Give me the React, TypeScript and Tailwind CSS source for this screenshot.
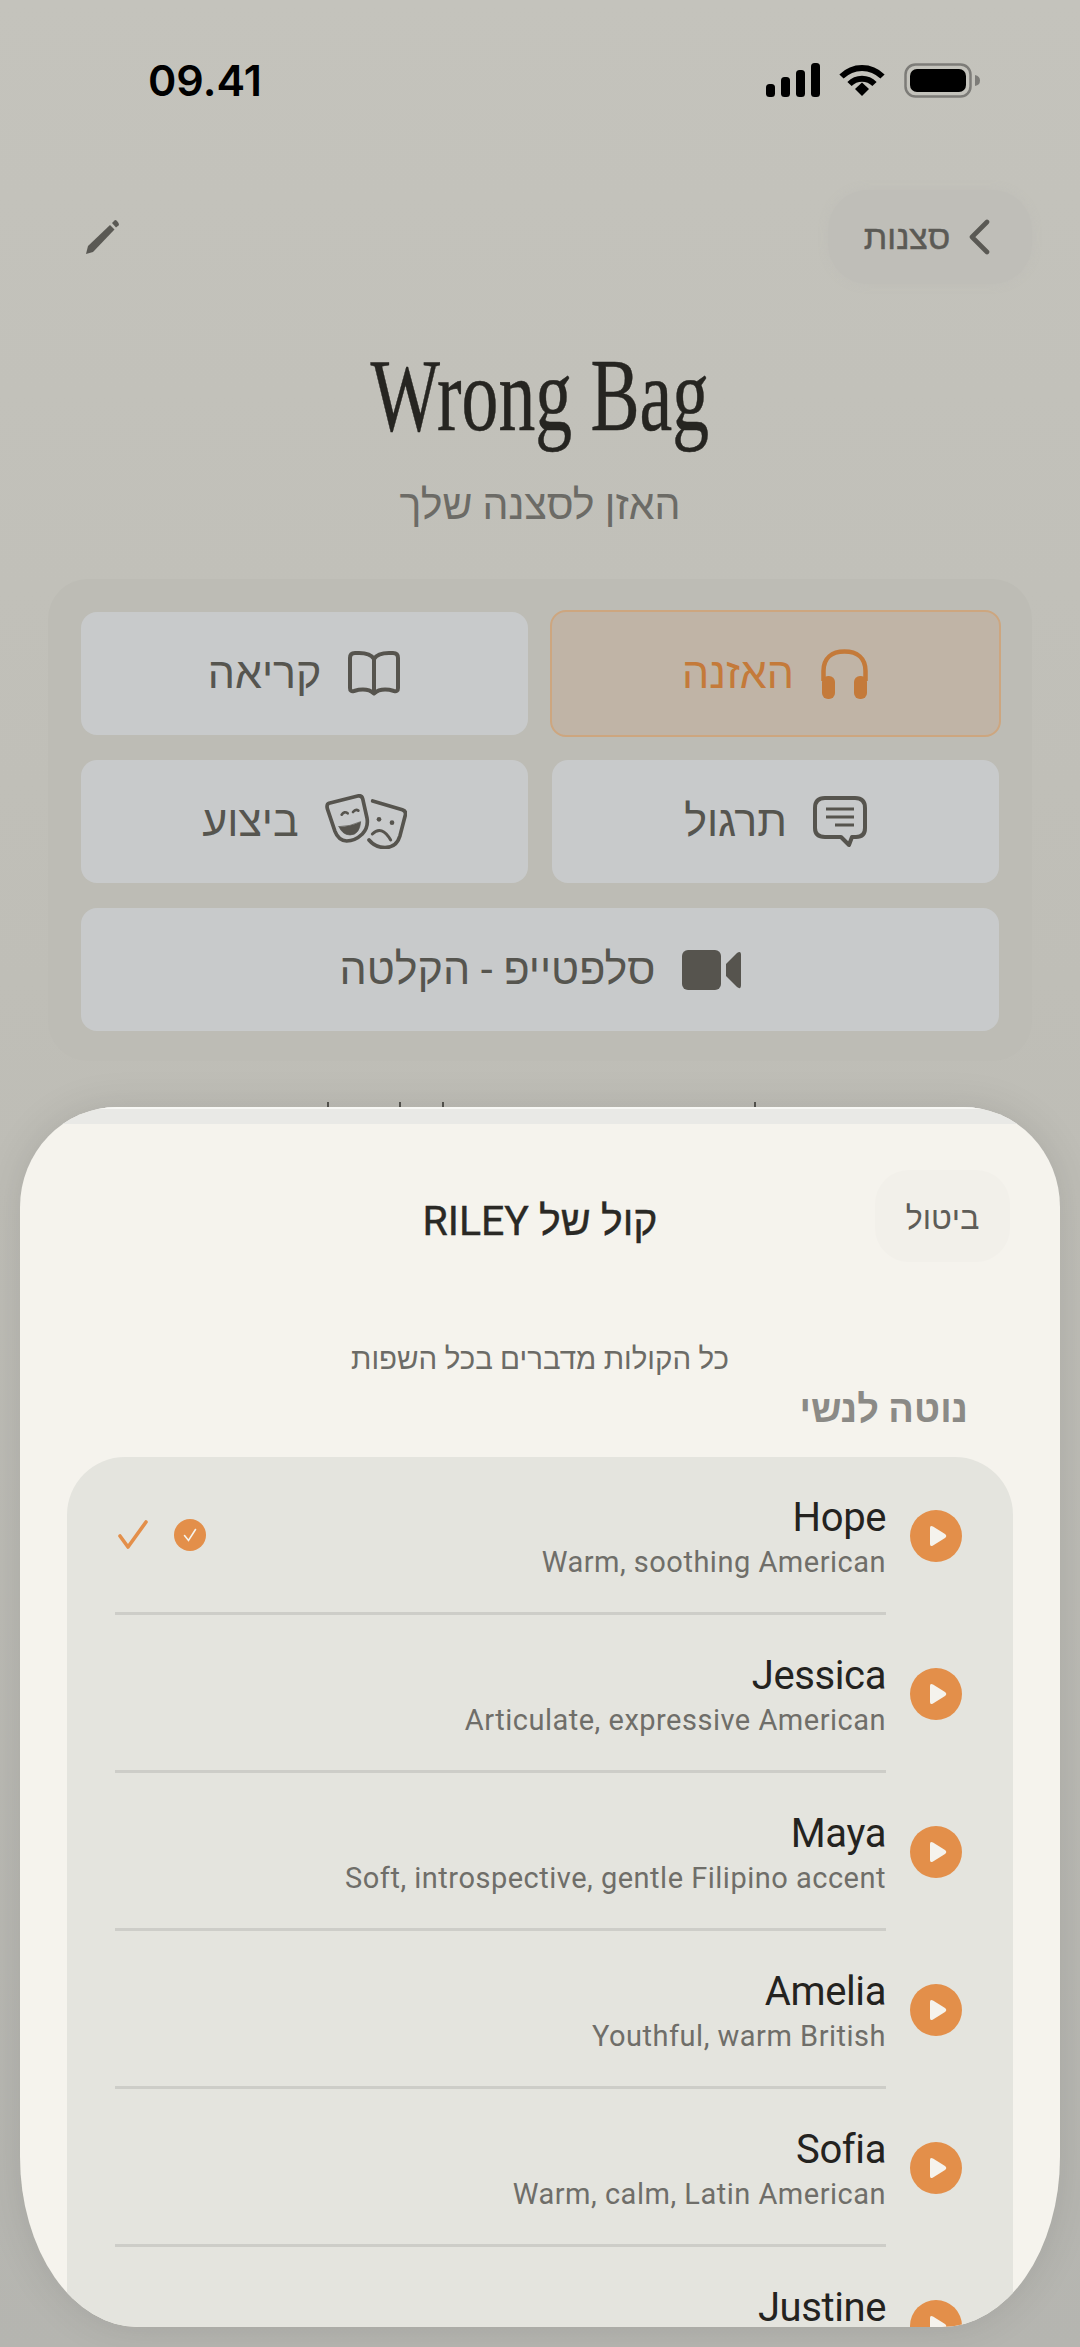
import type { ReactNode } from "react";

const sans = 'font-["Roboto","Liberation_Sans",sans-serif]';

const voices = [
  { name: "Hope", desc: "Warm, soothing American", selected: true },
  { name: "Jessica", desc: "Articulate, expressive American" },
  { name: "Maya", desc: "Soft, introspective, gentle Filipino accent" },
  { name: "Amelia", desc: "Youthful, warm British" },
  { name: "Sofia", desc: "Warm, calm, Latin American" },
  { name: "Justine" },
];

function StatusIcons() {
  return (
    <div dir="ltr" className="flex items-center gap-[19px]">
      <svg width="54" height="34" viewBox="0 0 54 34" fill="#000">
        <rect x="0" y="21" width="9" height="13" rx="3.5" />
        <rect x="15" y="14" width="9" height="20" rx="3.5" />
        <rect x="30" y="7" width="9" height="27" rx="3.5" />
        <rect x="45" y="0" width="9" height="34" rx="3.5" />
      </svg>
      <svg width="46" height="34" viewBox="0 0 46 34" fill="none" stroke="#000" strokeWidth="6">
        <path d="M2.5 13.5 C14 2 32 2 43.5 13.5" />
        <path d="M10.5 21 C17.5 14 28.5 14 35.5 21" />
        <path d="M16 26 L23 19.5 L30 26 L23 33 Z" fill="#000" stroke="none" />
      </svg>
      <svg width="76" height="35" viewBox="0 0 76 35">
        <rect x="1.5" y="1.5" width="65" height="32" rx="10" fill="none" stroke="#7d7c78" strokeWidth="2.5" />
        <rect x="6" y="6" width="56" height="23" rx="7" fill="#000" />
        <path d="M71 12 Q76 13 76 17.5 Q76 22 71 23 Z" fill="#7d7c78" />
      </svg>
    </div>
  );
}

function Pencil() {
  return (
    <svg width="35" height="36" viewBox="0 0 35 36" fill="#5a5954">
      <path d="M1 35 L3 27 L25 6 L29.5 10.5 L8 33 Z" />
      <path d="M27 4 L29.5 1.5 Q30.5 0.5 32 2 L33.5 4 Q34.5 5.5 33.5 6.5 L31 8.5 Z" />
    </svg>
  );
}

function Book() {
  return (
    <svg width="54" height="45" viewBox="0 0 54 45" fill="none" stroke="#56544e" strokeWidth="4" strokeLinejoin="round">
      <path d="M27 8 C24 3 18 2 12 2 H8 Q3 2 3 7 V37 Q3 41 7 40 C14 38 22 38 27 42.5 C32 38 40 38 47 40 Q51 41 51 37 V7 Q51 2 46 2 H42 C36 2 30 3 27 8 Z M27 8 V42" />
    </svg>
  );
}

function Headphones() {
  return (
    <svg width="49" height="50" viewBox="0 0 49 50" fill="#c47a3a">
      <path d="M3.5 32 V22 C3.5 9 12 2.5 24.5 2.5 C37 2.5 45.5 9 45.5 22 V32" fill="none" stroke="#c47a3a" strokeWidth="4.5" />
      <rect x="2" y="27" width="13" height="23" rx="6" />
      <rect x="34" y="27" width="13" height="23" rx="6" />
    </svg>
  );
}

function Masks() {
  return (
    <svg width="82" height="55" viewBox="0 0 246 165" fill="none" stroke="#56544e" strokeWidth="11" strokeLinecap="round" strokeLinejoin="round">
      <path d="M12 28 L98 6 Q110 3 113 14 L126 72 Q131 100 112 120 Q90 141 65 141 Q40 139 30 112 L7 44 Q4 31 12 28 Z" />
      <path d="M143 21 L232 47 Q244 51 241 63 L225 125 Q215 160 180 161 Q150 160 132 138" />
      <path d="M50 62 Q58 50 68 58" strokeWidth="8" />
      <path d="M84 54 Q92 44 100 50" strokeWidth="8" />
      <path d="M42 98 Q75 98 107 83 Q104 122 75 123 Q52 122 42 98 Z" fill="#56544e" strokeWidth="2" />
      <circle cx="162" cy="76" r="7" fill="#56544e" stroke="none" />
      <circle cx="201" cy="86" r="7" fill="#56544e" stroke="none" />
      <path d="M142 120 Q170 92 197 138" strokeWidth="9" />
    </svg>
  );
}

function Message() {
  return (
    <svg width="54" height="51" viewBox="0 0 54 51" fill="none" stroke="#56544e" strokeWidth="4" strokeLinejoin="round">
      <path d="M12 2 H42 Q52 2 52 12 V32 Q52 41 43 41 H39 L36 49 L28 41 H12 Q2 41 2 32 V12 Q2 2 12 2 Z" />
      <path d="M13 13 H41 M13 21 H41 M22 29 H41" strokeWidth="3" />
    </svg>
  );
}

function Video() {
  return (
    <svg width="59" height="40" viewBox="0 0 59 40" fill="#56544e">
      <rect x="0" y="0" width="39" height="40" rx="6" />
      <path d="M44 14 L55 3 Q59 0 59 5 V35 Q59 40 55 37 L44 26 Z" />
    </svg>
  );
}

function Mode({ label, icon, active, wide }: { label: string; icon: ReactNode; active?: boolean; wide?: boolean }) {
  return (
    <div
      className={[
        "flex items-center justify-center gap-[26px] rounded-[16px] text-[43px] leading-none",
        wide ? "col-span-2 h-[123px]" : "h-[123px]",
        active
          ? "-m-[2px] h-[127px] border-2 border-[#cda67f] bg-[#c0b4a6] text-[#c47a3a]"
          : "bg-[#c8cacb] text-[#56554f]",
      ].join(" ")}
    >
      {icon}
      <span>{label}</span>
    </div>
  );
}

function Voice({ name, desc, selected }: { name: string; desc?: string; selected?: boolean }) {
  return (
    <div className="flex h-[158px] shrink-0 items-center gap-[24px] pl-[48px] pr-[51px]">
      <div className="flex h-[52px] w-[52px] shrink-0 items-center justify-center rounded-full bg-[#e38f4a]">
        <svg width="18" height="22" viewBox="0 0 18 22" fill="#f5f3ed" className="ml-[3px]">
          <path d="M1 3 Q1 0 4 1.5 L16 9 Q18.5 11 16 13 L4 20.5 Q1 22 1 19 Z" />
        </svg>
      </div>
      <div className="flex h-full flex-1 items-center justify-between border-b-[3px] border-[#cdcdc8]">
        <div className="flex flex-col items-start pt-[6px]">
          <span dir="ltr" className="text-[40px] leading-[46px] tracking-[-0.4px] text-[#24231f]">{name}</span>
          <span dir="ltr" className="mt-[2px] min-h-[38px] text-[29px] leading-[38px] tracking-[0.5px] text-[#6f6e69]">{desc}</span>
        </div>
        {selected && (
          <div className="ml-[3px] flex items-center gap-[26px]">
            <div className="flex h-[32px] w-[32px] items-center justify-center rounded-full bg-[#e38f4a]">
              <svg width="16" height="16" viewBox="0 0 16 16" fill="none" stroke="#f5f3ed" strokeWidth="1.6" strokeLinecap="round">
                <path d="M2.5 8.5 L6.5 13.5 L13.5 2.5" />
              </svg>
            </div>
            <svg width="30" height="29" viewBox="0 0 30 29" fill="none" stroke="#e38f4a" strokeWidth="3.6" strokeLinecap="round" strokeLinejoin="round">
              <path d="M2 16 L10 27 L28 2" />
            </svg>
          </div>
        )}
      </div>
    </div>
  );
}

export default function App() {
  return (
    <div dir="rtl" className={`relative h-[2347px] w-[1080px] overflow-hidden bg-gradient-to-b from-[#c4c3bc] via-[#bebdb6] to-[#b5b5b0] ${sans}`}>
      {/* status bar */}
      <div className="flex h-[100px] items-center justify-between pl-[148px] pr-[100px] pt-[60px]">
        <StatusIcons />
        <span dir="ltr" className='font-["Inter",sans-serif] text-[43px] font-semibold leading-none text-black'>09.41</span>
      </div>

      {/* nav */}
      <div className="mt-[90px] flex h-[94px] items-center justify-between pl-[85px] pr-[48px]">
        <div className="flex h-full w-[204px] items-center justify-center gap-[18px] rounded-[40px] bg-[#bfbeb8] pr-[6px] shadow-[0_0_10px_rgba(191,190,184,0.9)]">
          <svg width="22" height="36" viewBox="0 0 22 36" fill="none" stroke="#5a5954" strokeWidth="4.6" strokeLinecap="round" strokeLinejoin="round">
            <path d="M19 3 L4 18 L19 33" />
          </svg>
          <span className="text-[34px] leading-none text-[#5b5a55] [-webkit-text-stroke:0.5px_#5b5a55]">סצנות</span>
        </div>
        <Pencil />
      </div>

      {/* title */}
      <div className="mt-[51px] flex h-[120px] items-center justify-center">
        <h1 dir="ltr" className='inline-block scale-x-[0.715] whitespace-nowrap font-["Liberation_Serif",serif] text-[103px] font-normal leading-none text-[#262521] [-webkit-text-stroke:0.5px_#262521]'>
          Wrong Bag
        </h1>
      </div>
      <p className="mt-[27px] text-center text-[41px] leading-[46px] text-[#6c6b66]">האזן לסצנה שלך</p>

      {/* modes */}
      <div className="mx-[48px] mt-[51px] grid h-[482px] grid-cols-2 content-start gap-x-[24px] gap-y-[25px] rounded-[40px] bg-[#bdbcb5] px-[33px] pt-[33px]">
        <Mode label="האזנה" icon={<Headphones />} active />
        <Mode label="קריאה" icon={<Book />} />
        <Mode label="תרגול" icon={<Message />} />
        <Mode label="ביצוע" icon={<Masks />} />
        <Mode label="סלפטייפ - הקלטה" icon={<Video />} wide />
      </div>

      {/* tops of the line hidden behind the sheet */}
      <div className="absolute left-[327px] top-[1102px] h-[5px] w-[2px] bg-[#55544f]" />
      <div className="absolute left-[399px] top-[1102px] h-[5px] w-[2px] bg-[#55544f]" />
      <div className="absolute left-[442px] top-[1102px] h-[5px] w-[2px] bg-[#55544f]" />
      <div className="absolute left-[754px] top-[1102px] h-[5px] w-[2px] bg-[#55544f]" />

      {/* voice sheet */}
      <div className="absolute left-[20px] top-[1107px] flex h-[1220px] w-[1040px] flex-col overflow-hidden rounded-[97px_97px_118px_118px/100px_100px_170px_170px] bg-[#f5f3ed] shadow-[0_0_40px_rgba(0,0,0,0.1)]">
        <div className="h-[17px] shrink-0 border-t-2 border-[#f7f7f4] bg-[#e9e9e6]" />
        <div className="mt-[46px] grid shrink-0 grid-cols-[1fr_auto_1fr] items-center px-[50px]">
          <div className="flex h-[92px] w-[135px] items-center justify-center rounded-[34px] bg-[#f2f0ea] pt-[4px]">
            <span className="text-[32px] leading-none text-[#5e5d58]">ביטול</span>
          </div>
          <span className="pt-[10px] text-[41px] font-normal leading-none text-[#2a2925] [-webkit-text-stroke:0.4px_#2a2925]">קול של RILEY</span>
          <div />
        </div>
        <p className="mt-[79px] shrink-0 text-center text-[29.5px] leading-[36px] text-[#6c6b66]">כל הקולות מדברים בכל השפות</p>
        <p className="mt-[10px] shrink-0 pr-[92px] text-[38px] font-semibold leading-[44px] text-[#8b8a86]">נוטה לנשי</p>
        <div className="mx-[47px] mt-[26px] flex shrink-0 flex-col rounded-t-[58px] bg-[#e4e4de]">
          {voices.map((v) => (
            <Voice key={v.name} name={v.name} desc={v.desc} selected={v.selected} />
          ))}
        </div>
      </div>
    </div>
  );
}
